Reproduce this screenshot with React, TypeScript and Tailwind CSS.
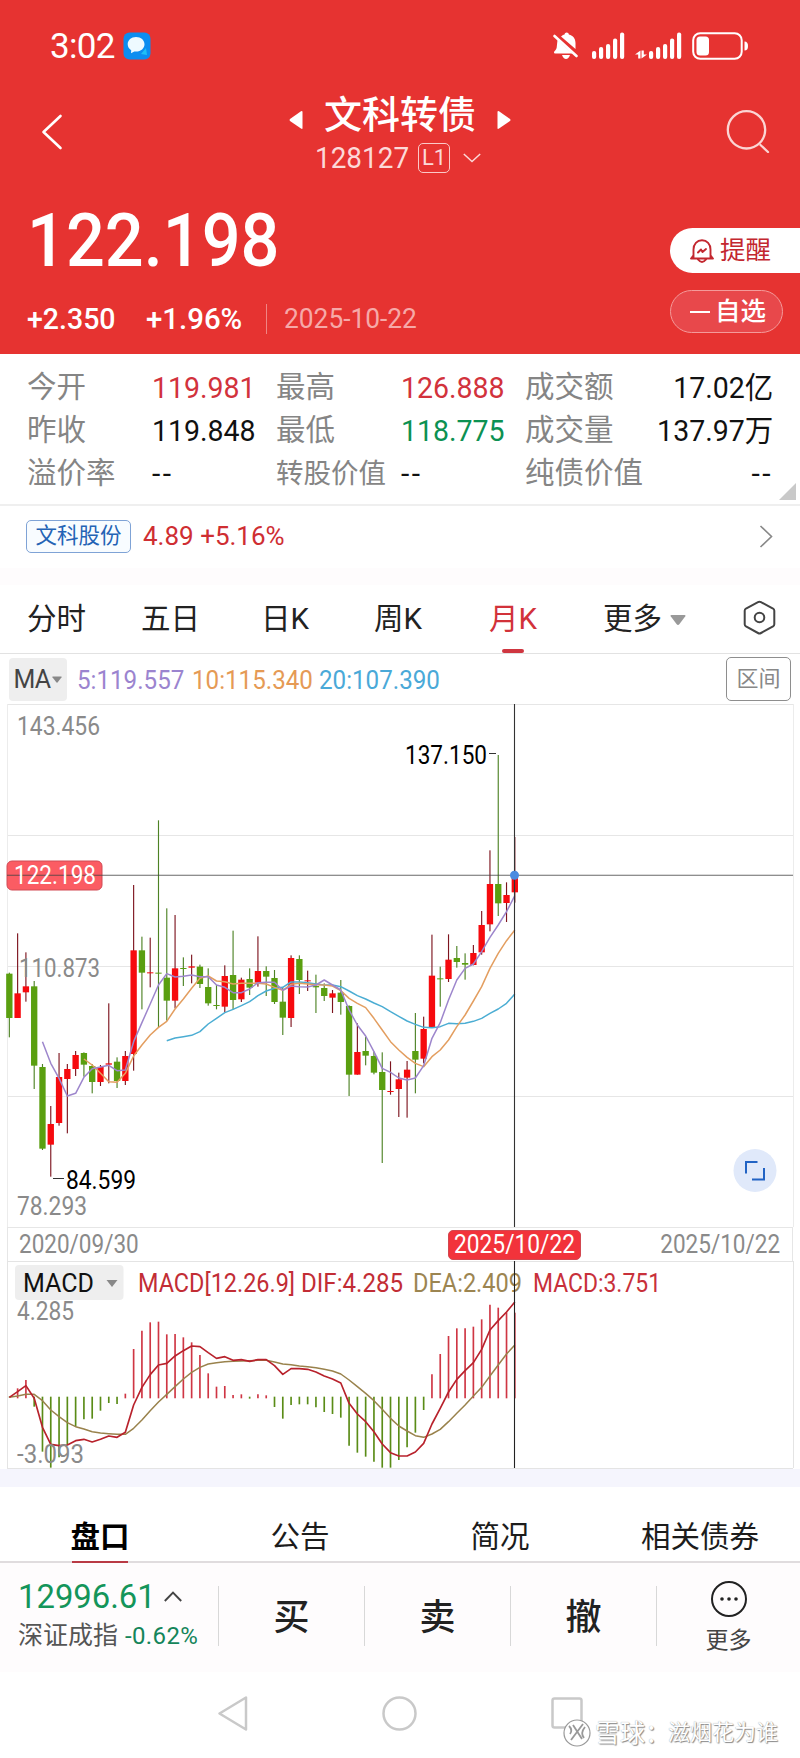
import React from 'react';

type Candle = [string, number, number, number, number];

const STEP = 24.86;
const START = 28;
const px = (i: number) => START + i * STEP;

// direction, high, body top, body bottom, low
const candles: Candle[] = [
    ['g', 518, 521, 654, 712], ['r', 400, 580, 654, 654], ['r', 457, 559, 577, 605], ['g', 543, 559, 797, 867],
    ['g', 792, 801, 1046, 1050], ['r', 918, 972, 1034, 1130], ['r', 759, 831, 969, 977], ['r', 792, 807, 837, 1000],
    ['r', 753, 765, 807, 828], ['g', 757, 759, 794, 830], ['g', 792, 798, 846, 880], ['r', 795, 801, 846, 858],
    ['r', 610, 790, 794, 850], ['g', 772, 785, 843, 864], ['r', 753, 768, 843, 855], ['r', 255, 451, 762, 812],
    ['g', 410, 451, 518, 628], ['r', 413, 517, 519, 562], ['g', 61, 518, 521, 682], ['g', 325, 533, 602, 662],
    ['r', 345, 505, 602, 625], ['g', 472, 504, 506, 558], ['r', 464, 499, 503, 550], ['g', 494, 500, 552, 564],
    ['g', 505, 561, 610, 617], ['g', 555, 615, 617, 628], ['r', 496, 528, 620, 636], ['g', 392, 525, 600, 628],
    ['r', 533, 539, 598, 606], ['g', 505, 537, 563, 585], ['r', 409, 513, 548, 560], ['g', 499, 513, 530, 588],
    ['g', 510, 534, 606, 612], ['g', 562, 605, 653, 705], ['r', 466, 474, 654, 681], ['g', 466, 477, 540, 582],
    ['r', 512, 541, 543, 573], ['g', 524, 558, 562, 639], ['g', 550, 564, 588, 603], ['r', 570, 580, 593, 639],
    ['g', 540, 578, 606, 644], ['g', 616, 618, 824, 888], ['r', 670, 756, 824, 824], ['g', 710, 753, 767, 796],
    ['g', 755, 768, 818, 823], ['g', 757, 816, 870, 1089], ['r', 784, 873, 876, 884], ['r', 818, 838, 867, 951],
    ['r', 783, 809, 833, 953], ['g', 639, 753, 779, 880], ['r', 650, 687, 776, 790], ['r', 404, 527, 682, 684],
    ['g', 500, 535, 537, 620], ['r', 403, 479, 537, 546], ['g', 438, 474, 486, 503], ['g', 460, 489, 494, 539],
    ['r', 435, 459, 495, 496], ['r', 333, 375, 457, 464], ['r', 151, 252, 373, 394], ['g', -135, 252, 310, 348],
    ['r', 247, 285, 309, 366], ['r', 111, 225, 277, 308],
];

const ma5 = [
    725, 790, 835, 888, 880, 832, 806, 801, 796, 812, 810, 725, 668, 612, 555, 521, 531, 529, 525, 530, 530, 555, 562,
    578, 578, 567, 548, 547, 547, 571, 558, 560, 561, 555, 540, 555, 570, 630, 675, 708, 755, 805, 817, 834, 840, 834,
    797, 715, 668, 600, 540, 505, 492, 455, 412, 375, 335, 287,
];
const ma10 = [
    777, 795, 820, 845, 847, 820, 768, 735, 705, 682, 664, 627, 597, 565, 535, 528, 543, 545, 552, 550, 550, 550, 552,
    562, 571, 553, 550, 552, 554, 555, 558, 572, 595, 610, 623, 655, 690, 725, 750, 772, 790, 800, 770, 750, 720, 680,
    645, 603, 560, 505, 460, 422, 390,
];
const ma20 = [
    722, 714, 710, 706, 695, 672, 655, 638, 628, 617, 605, 587, 573, 565, 562, 546, 546, 548, 552, 555, 555, 560, 573,
    587, 597, 609, 620, 635, 649, 663, 673, 682, 683, 680, 670, 671, 670, 664, 655, 640, 627, 610, 582,
];

const ZERO = 652;
const bars = [
    652, 625, 600, 680, 815, 863, 832, 795, 740, 718, 716, 692, 669, 672, 641, 507, 452, 427, 425, 463, 462, 472, 487,
    525, 580, 620, 618, 645, 643, 656, 643, 646, 681, 716, 675, 673, 673, 682, 696, 702, 713, 797, 818, 830, 845, 863,
    863, 840, 802, 758, 690, 583, 522, 468, 445, 445, 440, 418, 374, 383, 397, 398,
];
const dif = [
    652, 635, 617, 655, 742, 793, 797, 795, 782, 778, 786, 778, 768, 772, 757, 675, 622, 584, 555, 550, 528, 512, 498,
    500, 518, 535, 530, 541, 539, 544, 539, 539, 557, 583, 566, 566, 568, 576, 588, 597, 609, 670, 702, 725, 755, 792,
    818, 828, 828, 816, 790, 732, 685, 636, 598, 572, 548, 508, 450, 422, 396, 366,
];
const dea = [
    652, 648, 643, 643, 662, 690, 710, 728, 740, 747, 755, 759, 761, 763, 763, 745, 720, 692, 666, 643, 620, 597, 577,
    562, 552, 548, 545, 544, 543, 542, 541, 541, 546, 552, 554, 558, 560, 563, 568, 573, 582, 600, 620, 640, 662, 688,
    715, 738, 753, 767, 772, 762, 748, 725, 700, 675, 648, 622, 588, 555, 522, 495,
];

const line = (values: number[], from = 0) => values.map((v, i) => `${px(i + from).toFixed(1)},${v}`).join(' ');

const stats = [
    [['今开', '119.981', 'text-[#d2323c]'], ['最高', '126.888', 'text-[#d2323c]'], ['成交额', '17.02亿', 'text-[#111]']],
    [['昨收', '119.848', 'text-[#111]'], ['最低', '118.775', 'text-[#0c9152]'], ['成交量', '137.97万', 'text-[#111]']],
    [['溢价率', '--', 'text-[#111]'], ['转股价值', '--', 'text-[#111]'], ['纯债价值', '--', 'text-[#111]']],
];

const periods = [
    { label: '分时', width: 'w-[114px]' },
    { label: '五日', width: 'w-[120px]' },
    { label: '日K', width: 'w-[113px]' },
    { label: '周K', width: 'w-[115px]' },
    { label: '月K', width: 'w-[114px]', active: true },
];

const Caret = ({ className }: { className: string }) => (
    <svg viewBox="0 0 16 10" className={className} fill="currentColor">
        <path d="M1.5 0h13q1.5 0 .8 1.2L9.5 9q-1.5 2-3 0L.7 1.2Q0 0 1.5 0z" />
    </svg>
);

const Signal = () => (
    <svg className="w-[34px] h-[28px]" viewBox="0 0 34 28" fill="#fff">
        <rect x="0" y="19" width="4.2" height="8" rx="2" />
        <rect x="7" y="15" width="4.2" height="12" rx="2" />
        <rect x="14" y="12" width="4.2" height="15" rx="2" />
        <rect x="21" y="6.5" width="4.2" height="20.5" rx="2" />
        <rect x="28" y="0.5" width="4.2" height="26.5" rx="2" />
    </svg>
);

// Label drawn inside the chart, fitted to its slot
const ChartText = ({ x, y, w, fill, size = 25, children }: { x: number; y: number; w: number; fill: string; size?: number; children: string }) => (
    <text x={x} y={y} textLength={w} lengthAdjust="spacingAndGlyphs" fontSize={size} fill={fill}>{children}</text>
);

const Header = () => (
    <header className="h-[354px] bg-[#e63331] text-white">
        <div className="h-[92px] pl-[50px] pr-[51px] flex items-center">
            <span className="text-[35px] leading-none tracking-[-0.02em]">3:02</span>
            <svg className="w-[28px] h-[28px] ml-[8px]" viewBox="0 0 28 28">
                <rect x="0.5" y="0.5" width="27" height="27" rx="6" fill="#0c8df0" />
                <path d="M13 5c5 0 8.500 3.200 8.500 7.300S18 19.600 13 19.600c-.6 0-1.200 0-1.700-.1L8 21.300l.2-3C6 17 4.700 14.800 4.700 12.300 4.700 8.200 8.200 5 13 5z" fill="#eefaff" />
                <path d="M23 16l1 7-6-1z" fill="#1fc0f5" />
            </svg>
            <div className="ml-auto flex items-center">
                <svg className="w-[26px] h-[28px]" viewBox="0 0 26 28" fill="#fff">
                    <path d="M8 4.500C9.500 3.300 10.500 2.800 11.500 2.600c.2-2.800 4.200-2.800 4.400 0 4.300 1 6.600 4.200 6.600 8.400v6z" />
                    <path d="M4.500 8l15 13.500H2.500q-2 0-1.500-1.600c.3-1 2.500-2 2.700-4.400z" />
                    <path d="M9 23h8q-1.500 4-4 4t-4-4z" />
                    <path d="M1.500 4l22 20" stroke="#fff" strokeWidth="2.600" strokeLinecap="round" />
                </svg>
                <div className="ml-[13px]"><Signal /></div>
                <svg className="w-[12px] h-[28px] ml-[9px]" viewBox="0 0 12 28" fill="#fff">
                    <path d="M5.500 18.500v8H3.200v-4H0zM6.500 26.500v-8h2.300v4H12z" />
                </svg>
                <div className="ml-[2px]"><Signal /></div>
                <svg className="w-[57px] h-[28px] ml-[9px]" viewBox="0 0 57 28">
                    <rect x="1.2" y="1.2" width="48.5" height="25.6" rx="7" fill="none" stroke="#fff" strokeWidth="2" />
                    <rect x="4.5" y="4.5" width="12.5" height="19" rx="3.5" fill="#fff" />
                    <path d="M52.500 9.500q3.500 0 3.500 4.500t-3.500 4.500z" fill="#fff" />
                </svg>
            </div>
        </div>

        <div className="h-[94px] pl-[40px] pr-[30px] flex justify-between">
            <svg className="w-[24px] h-[36px] mt-[22px]" viewBox="0 0 24 36" fill="none" stroke="#fff" strokeWidth="2.600" strokeLinecap="round" strokeLinejoin="round">
                <path d="M20.500 2L3.500 18l17 16" />
            </svg>
            <div className="flex flex-col items-center ml-[10px]">
                <div className="h-[44px] flex items-center">
                    <svg className="w-[14px] h-[20px] mt-[11px]" viewBox="0 0 14 20" fill="#fff"><path d="M13.500 2v16q0 1.500-1.500.5L1 11q-1-1 0-2L12 1.200q1.500-.7 1.500.8z" /></svg>
                    <h1 className="text-[38px] leading-none font-medium mx-[21px] pt-[1px]">文科转债</h1>
                    <svg className="w-[14px] h-[20px] mt-[11px]" viewBox="0 0 14 20" fill="#fff"><path d="M.5 2v16q0 1.500 1.500.5L13 11q1-1 0-2L2 1.200Q.5.5.5 2z" /></svg>
                </div>
                <div className="h-[44px] -ml-[4px] flex items-center text-[#fcd9d8]">
                    <span className="w-[93px] text-[30px] leading-none"><span className="inline-block origin-left scale-x-[.93]">128127</span></span>
                    <span className="ml-[10px] w-[32px] h-[30px] border-[1.5px] border-[#fbc9c8] rounded-[5px] text-[22px] leading-none flex items-center justify-center">L1</span>
                    <svg className="w-[18px] h-[10px] ml-[13px]" viewBox="0 0 18 10" fill="none" stroke="currentColor" strokeWidth="1.500"><path d="M.8 1l8.200 7.500L17.200 1" /></svg>
                </div>
            </div>
            <svg className="w-[44px] h-[44px] mt-[17px]" viewBox="0 0 44 44" fill="none" stroke="#fbd5d4" strokeWidth="2.300" strokeLinecap="round">
                <circle cx="20.5" cy="20.8" r="18.7" />
                <path d="M34.500 36l7.500 7" />
            </svg>
        </div>

        <div className="flex justify-between">
            <div className="pl-[27px]">
                <div className="h-[104px] pt-[5px] flex items-center text-[74px] leading-none font-medium">
                    <span className="inline-block origin-left scale-x-[.925]">122.198</span>
                </div>
                <div className="h-[56px] pt-[2px] flex items-center text-[30px] leading-none">
                    <span className="w-[119px] font-medium"><span className="inline-block origin-left scale-x-[.95]">+2.350</span></span>
                    <span className="w-[120px] font-medium"><span className="inline-block origin-left scale-x-[.98]">+1.96%</span></span>
                    <span className="w-px h-[30px] bg-[#f08584]" />
                    <span className="ml-[17px] text-[28px] text-[#f6a9a8] origin-left scale-x-[.94]">2025-10-22</span>
                </div>
            </div>
            <div className="w-[130px] pt-[42px]">
                <div className="h-[45px] pl-[20px] bg-white rounded-l-full text-[#c3272f] flex items-center">
                    <svg className="w-[24px] h-[26px]" viewBox="0 0 24 26" fill="none" stroke="currentColor" strokeWidth="1.900" strokeLinejoin="round" strokeLinecap="round">
                        <path d="M3.500 20V11.500C3.500 6 7 2.200 12 2.200s8.500 3.800 8.500 9.300V20M1 20.500h22M1.200 20.500l2.300-3.300M22.800 20.500l-2.300-3.300M8 21.500q4 5 8 0M8 14.500l3-3 1.500 2.500 3.500-3" />
                    </svg>
                    <span className="ml-[6px] pt-[1px] text-[25.5px] leading-none">提醒</span>
                </div>
                <div className="mt-[17px] w-[113px] h-[43px] rounded-full border border-[#f49a9a] bg-[#e8484b] flex items-center pl-[19px]">
                    <span className="w-[20px] h-[2px] bg-white" />
                    <span className="ml-[5px] pt-[1px] text-[25.5px] leading-none font-medium">自选</span>
                </div>
            </div>
        </div>
    </header>
);

const PriceChart = () => (
    <svg className="block w-[800px] h-[523px]" viewBox="0 704 800 523">
        <g stroke="#e6e6e6" strokeWidth="1">
            <path d="M7 704.5H793M7 835.5H793M7 966.5H793M7 1096.5H793" />
            <path d="M7.5 704V1227M793.5 704V1227" stroke="#ececec" />
        </g>
        <ChartText x={17} y={735} w={83} fill="#8a8a8a">143.456</ChartText>
        <ChartText x={17} y={1215} w={70} fill="#8a8a8a">78.293</ChartText>
        <g transform="translate(0 800) scale(0.33333)">
            {candles.map(([dir, high, top, bottom, low], i) => (
                <g key={i}>
                    <rect x={px(i) - 1.7} y={high} width={3.4} height={low - high} fill={dir === 'r' ? '#7d141e' : '#4d8224'} />
                    <rect x={px(i) - 9.5} y={top} width={19} height={Math.max(bottom - top, 3)} fill={dir === 'r' ? '#f60a0e' : '#5a9f10'} />
                </g>
            ))}
            <g fill="none" strokeWidth="4.5" strokeLinejoin="round">
                <polyline points={line(ma20, 19)} stroke="#4badd3" />
                <polyline points={line(ma10, 9)} stroke="#e39e60" />
                <polyline points={line(ma5, 4)} stroke="#9d86cc" />
            </g>
        </g>
        <ChartText x={19} y={977} w={81} fill="#8a8a8a">110.873</ChartText>
        <path d="M514.5 704V1227" stroke="#333" strokeWidth="1.1" />
        <rect x="7" y="861" width="95" height="29" rx="5" fill="#fb5c63" stroke="#d14a55" />
        <path d="M7 875.3H793" stroke="#444" strokeOpacity=".8" strokeWidth="1.1" />
        <circle cx="514.5" cy="875.3" r="4.5" fill="#4b8be0" />
        <ChartText x={14} y={884} w={82} fill="#fff">122.198</ChartText>
        <ChartText x={405} y={764} w={82} fill="#000">137.150</ChartText>
        <ChartText x={66} y={1189} w={70} fill="#000">84.599</ChartText>
        <path d="M489 753.5h7M53 1178.5h11" stroke="#333" />
        <circle cx="755" cy="1170.5" r="21.5" fill="#e0e9fa" />
        <path d="M757.5 1162H746v11.5M752 1179.5h12V1168" fill="none" stroke="#2163c4" strokeWidth="2" />
    </svg>
);

const MacdChart = () => (
    <svg className="block w-[800px] h-[208px]" viewBox="0 1261 800 208">
        <path d="M7 1261.5H793M7 1468.5H793M7.5 1261V1468M793.5 1261V1468" stroke="#e4e4e4" />
        <rect x="15" y="1265" width="108.5" height="35" rx="4" fill="#eee" />
        <ChartText x={23} y={1292} w={71} fill="#111">MACD</ChartText>
        <path d="M106.5 1280h11l-5.500 7z" fill="#888" />
        <ChartText x={138} y={1292} w={157} fill="#c22d35">MACD[12.26.9]</ChartText>
        <ChartText x={301} y={1292} w={102} fill="#c22d35">DIF:4.285</ChartText>
        <ChartText x={413} y={1292} w={109} fill="#9c8551">DEA:2.409</ChartText>
        <ChartText x={533} y={1292} w={128} fill="#c8303a">MACD:3.751</ChartText>
        <ChartText x={17} y={1320} w={57} fill="#8a8a8a">4.285</ChartText>
        <g transform="translate(0 1180) scale(0.33333)" fill="none" strokeLinejoin="round">
            {bars.map((v, i) => (
                <path key={i} d={`M${px(i)} ${v < ZERO ? ZERO + 3 : ZERO - 2}V${v}`} stroke={v < ZERO ? '#cf3644' : '#5a8c17'} strokeWidth="5" />
            ))}
            <polyline points={line(dea)} stroke="#99824c" strokeWidth="4.5" />
            <polyline points={line(dif)} stroke="#b8222c" strokeWidth="5" />
        </g>
        <ChartText x={17} y={1463} w={67} fill="#8a8a8a">-3.093</ChartText>
        <path d="M514.5 1261V1468" stroke="#222" strokeWidth="1.1" />
    </svg>
);

const App: React.FC = () => {
    return (
        <div className="w-[800px] h-[1758px] overflow-hidden bg-white font-['Roboto','Noto_Sans_CJK_SC',sans-serif] text-[#222] whitespace-nowrap">
            <Header />

            {/* Quote summary */}
            <section className="relative h-[152px] pt-[12px] border-b-2 border-[#efefef]">
                {stats.map((row, r) => (
                    <div key={r} className="h-[43px] pl-[27px] pr-[27px] grid grid-cols-[249px_249px_248px]">
                        {row.map(([label, value, color], c) => (
                            <div key={label} className="flex items-center leading-none">
                                <span className={label === '转股价值' ? 'w-[125px] text-[27.5px] text-[#858585]' : 'w-[125px] text-[29.5px] text-[#858585]'}>{label}</span>
                                <span className={`text-[30px] ${color} ${c === 2 ? 'ml-auto origin-right' : 'origin-left'} ${value === '--' ? 'tracking-[0.08em]' : 'scale-x-[.95]'}`}>{value}</span>
                            </div>
                        ))}
                    </div>
                ))}
                <svg className="absolute right-[4px] bottom-[4px] w-[17px] h-[17px]" viewBox="0 0 17 17"><path d="M17 0v17H0z" fill="#c9c9c9" /></svg>
            </section>

            {/* Underlying stock */}
            <section className="h-[62px] pb-[2px] pl-[26px] pr-[27px] flex items-center leading-none">
                <span className="w-[105px] h-[33px] border border-[#7fa3d6] bg-[#f8fcff] rounded-[5px] text-[21.5px] text-[#2463b5] flex items-center justify-center">文科股份</span>
                <span className="ml-[12px] text-[26px] text-[#cf2e32]">4.89 +5.16%</span>
                <svg className="ml-auto w-[14px] h-[23px]" viewBox="0 0 14 23" fill="none" stroke="#888" strokeWidth="1.600"><path d="M1.500 1l11 10.500-11 10.500" /></svg>
            </section>
            <div className="h-[17px] bg-[#fefcfd]" />

            {/* Period tabs */}
            <nav className="h-[69px] pl-[27px] pr-[24px] border-b border-[#e2e2e2] flex items-center text-[29.5px] leading-none">
                {periods.map((p) => (
                    <div key={p.label} className={`relative h-full pt-[2px] flex items-center ${p.width} ${p.active ? 'text-[#d2323a]' : ''}`}>
                        {p.label}
                        {p.active && <span className="absolute left-[13px] bottom-0 w-[22px] h-[4px] rounded-full bg-[#cf3640]" />}
                    </div>
                ))}
                <span className="pt-[2px]">更多</span>
                <Caret className="w-[16px] h-[10px] ml-[8px] mt-[2px] text-[#999]" />
                <svg className="ml-auto w-[33px] h-[35px] -mt-[3px]" viewBox="0 0 33 35" fill="none" stroke="#444" strokeWidth="2">
                    <path d="M15 2.200q1.500-.8 3 0l12 6.300q1.300.8 1.300 2.200v13.500q0 1.500-1.300 2.300l-12 6.500q-1.500.8-3 0l-12-6.500q-1.300-.8-1.300-2.300V10.700Q1.700 9.300 3 8.500z" />
                    <circle cx="16.5" cy="17.5" r="4.8" />
                </svg>
            </nav>

            {/* Moving averages */}
            <div className="h-[50px] pl-[9px] pr-[9px] flex items-center leading-none text-[26px]">
                <span className="w-[58px] h-[43px] rounded-[4px] bg-[#eee] flex items-center justify-center text-[25px] tracking-[-0.03em] text-[#444]">
                    MA<Caret className="w-[10px] h-[7px] ml-[2px] text-[#888]" />
                </span>
                <span className="ml-[10px] w-[115px] pt-[1px] text-[#9b84cf]"><span className="inline-block origin-left scale-x-[.93]">5:119.557</span></span>
                <span className="w-[127px] pt-[1px] text-[#e59a55]"><span className="inline-block origin-left scale-x-[.93]">10:115.340</span></span>
                <span className="w-[130px] pt-[1px] text-[#4aa9d8]"><span className="inline-block origin-left scale-x-[.93]">20:107.390</span></span>
                <span className="ml-auto w-[65px] h-[44px] border-[1.5px] border-[#8e8e8e] rounded-[5px] flex items-center justify-center text-[22px] text-[#888]">区间</span>
            </div>

            <PriceChart />
            <div className="h-[34px] mx-[7px] border-t border-x border-[#e6e6e6] flex items-center text-[25px] leading-none text-[#8a8a8a]">
                <span className="pl-[11px] w-[440px]"><span className="inline-block origin-left scale-x-[.9]">2020/09/30</span></span>
                <span className="w-[133px] h-[30px] rounded-[5px] bg-[#f2333b] border border-[#d24850] text-white flex items-center justify-center"><span className="scale-x-[.91]">2025/10/22</span></span>
                <span className="ml-auto pr-[12px]"><span className="inline-block origin-right scale-x-[.9]">2025/10/22</span></span>
            </div>
            <MacdChart />
            <div className="h-[18px] bg-[#f5f5fd]" />

            {/* Detail tabs */}
            <nav className="h-[76px] pt-[23px] border-b-2 border-[#e0dcde] grid grid-cols-4 text-[29.5px] text-[#1c1c1c]">
                {['盘口', '公告', '简况', '相关债券'].map((label, i) => (
                    <div key={label} className="flex justify-center leading-[54px]">
                        <span className={i === 0 ? 'w-[56px] h-[53px] flex justify-center font-bold text-black border-b-2 border-[#b93a44]' : ''}>{label}</span>
                    </div>
                ))}
            </nav>

            {/* Trade bar */}
            <footer className="h-[109px] bg-[#fefcfd] flex leading-none">
                <div className="w-[218px] pl-[18px] pt-[13px]">
                    <div className="h-[40px] flex items-center text-[34px] text-[#14955a]">
                        <span className="w-[135px]"><span className="inline-block origin-left scale-x-[.965]">12996.61</span></span>
                        <svg className="w-[18px] h-[11px] ml-[11px]" viewBox="0 0 18 11" fill="none" stroke="#444" strokeWidth="1.900"><path d="M.8 10L9 1.500l8.200 8.500" /></svg>
                    </div>
                    <div className="h-[38px] pt-[1px] flex items-center text-[25px] text-[#555]">
                        深证成指
                        <span className="ml-[7px] text-[24px] tracking-[0.015em] text-[#14855a]">-0.62%</span>
                    </div>
                </div>
                {['买', '卖', '撤'].map((label) => (
                    <div key={label} className="mt-[23px] pt-[4px] w-[146px] h-[60px] border-l border-[#d8d8d8] flex items-center justify-center text-[36px] font-medium">{label}</div>
                ))}
                <div className="mt-[23px] flex-1 h-[60px] border-l border-[#d8d8d8]">
                    <div className="-mt-[6px] flex flex-col items-center">
                        <svg className="w-[38px] h-[38px]" viewBox="0 0 38 38" fill="#222">
                            <circle cx="19" cy="19" r="17" fill="none" stroke="#222" strokeWidth="2" />
                            <circle cx="12" cy="19" r="1.8" /><circle cx="19" cy="19" r="1.8" /><circle cx="26" cy="19" r="1.8" />
                        </svg>
                        <span className="mt-[11px] text-[23px] text-[#444]">更多</span>
                    </div>
                </div>
            </footer>

            {/* System navigation */}
            <div className="relative h-[86px] pb-[4px] flex justify-center items-center gap-[134px] text-[#c9c9c9]">
                <svg className="w-[30px] h-[35px]" viewBox="0 0 30 35" fill="none" stroke="currentColor" strokeWidth="2.500" strokeLinejoin="round"><path d="M28 1.500v32L1.500 17.500z" /></svg>
                <svg className="w-[35px] h-[35px]" viewBox="0 0 35 35" fill="none" stroke="currentColor" strokeWidth="2.500"><circle cx="17.5" cy="17.5" r="16" /></svg>
                <svg className="w-[32px] h-[32px]" viewBox="0 0 32 32" fill="none" stroke="currentColor" strokeWidth="2.500"><rect x="1.5" y="1.5" width="29" height="29" rx="2" /></svg>
                <div className="absolute left-[563px] top-[46px] h-[30px] flex items-center leading-none text-white [text-shadow:1px_1px_1px_#888,0_0_1px_#999]">
                    <svg className="w-[28px] h-[28px]" viewBox="0 0 28 28" fill="#fff" stroke="#999" strokeWidth="1.200">
                        <circle cx="14" cy="14" r="13" />
                        <path d="M6 7q4 4 1 8M10 6l9 14M20 5L8 21M22 8q-5 6-1 11" fill="none" strokeWidth="1.800" />
                    </svg>
                    <span className="ml-[4px] text-[25px]">雪球：</span>
                    <span className="-ml-[2px] text-[22px]">滋烟花为谁</span>
                </div>
            </div>
        </div>
    );
};

export default App;
